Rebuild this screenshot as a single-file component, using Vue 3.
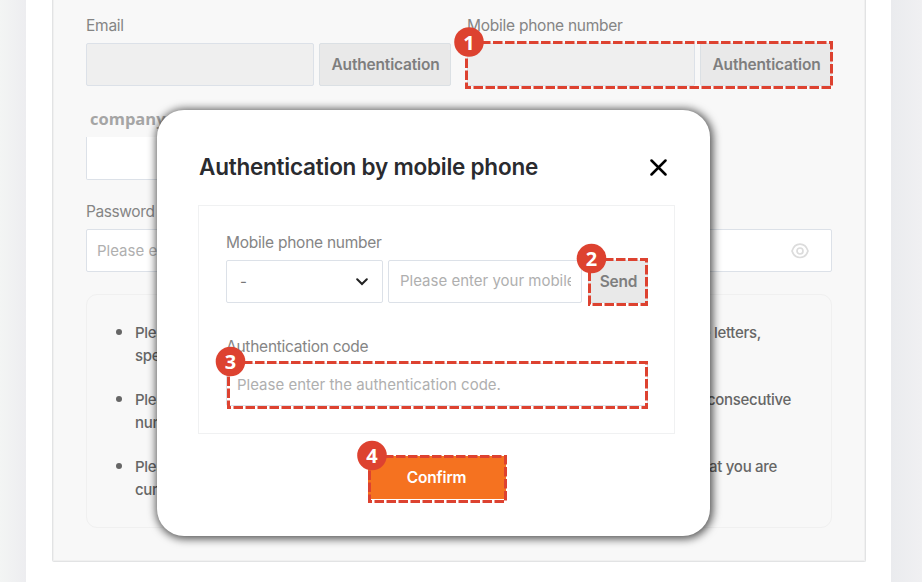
<script setup>
const notes = [
  { head: 'Please', tail: 'include letters,', next: 'special', size: 'short' },
  { head: 'Please', tail: 'consecutive', next: 'numbers', size: 'long' },
  { head: 'Please', tail: 'that you are', next: 'currently', size: 'mid' },
]
const marks = [
  { n: 1, x: 466.5, y: 42.5, w: 365, h: 45, cx: 469, cy: 42 },
  { n: 2, x: 589.5, y: 259.5, w: 57, h: 45, cx: 591.5, cy: 258.5 },
  { n: 3, x: 228.5, y: 362.5, w: 418, h: 45, cx: 230.5, cy: 361.5 },
  { n: 4, x: 369.5, y: 456.5, w: 136, h: 45, cx: 372, cy: 455.5 },
]
</script>

<template>
  <div class="page">
    <main class="sheet">
      <section class="panel">
        <div class="columns">
          <div class="field">
            <label class="label">Email</label>
            <div class="controls">
              <div class="input disabled"></div>
              <button class="btn">Authentication</button>
            </div>
          </div>
          <div class="field">
            <label class="label">Mobile phone number</label>
            <div class="controls">
              <div class="input disabled"></div>
              <button class="btn">Authentication</button>
            </div>
          </div>
        </div>
        <div class="company">company</div>
        <div class="input company-input"></div>
        <label class="label password-label">Password</label>
        <div class="input password">
          <span class="placeholder">Please enter</span>
          <svg class="eye" viewBox="0 0 18 16" width="18" height="16">
            <path d="M1 8C2.5 3.5 5.5 1.2 9 1.2S15.500 3.500 17 8C15.500 12.500 12.500 14.500 9 14.500S2.500 12.500 1 8Z" />
            <circle cx="9" cy="8" r="3" />
          </svg>
        </div>
        <ul class="notes">
          <li v-for="(note, i) in notes" :key="i">
            <div class="line" :class="note.size"><span>{{ note.head }}</span><span>{{ note.tail }}</span></div>
            <div class="line">{{ note.next }}</div>
          </li>
        </ul>
      </section>
    </main>

    <section class="modal">
      <header class="modal-head">
        <h1>Authentication by mobile phone</h1>
        <svg class="close" width="17" height="17" viewBox="0 0 17 17"><path d="M1.500 1.500L15.500 15.500M15.500 1.500L1.500 15.500" /></svg>
      </header>
      <div class="card">
        <label class="label">Mobile phone number</label>
        <div class="controls">
          <div class="input select">
            <span class="dash">-</span>
            <svg width="12" height="8" viewBox="0 0 12 8"><path d="M1.200 1.200L6 6L10.800 1.200" /></svg>
          </div>
          <div class="input number"><span class="placeholder">Please enter your mobile</span></div>
          <button class="btn send">Send</button>
        </div>
        <label class="label code-label">Authentication code</label>
        <div class="input code"><span class="placeholder">Please enter the authentication code.</span></div>
      </div>
      <button class="confirm">Confirm</button>
    </section>

    <svg class="marks" width="922" height="582" viewBox="0 0 922 582">
      <g v-for="m in marks" :key="m.n">
        <rect :x="m.x" :y="m.y" :width="m.w" :height="m.h" />
        <circle :cx="m.cx" :cy="m.cy" r="14.8" />
        <text :x="m.cx" :y="m.cy + 7.500">{{ m.n }}</text>
      </g>
    </svg>
  </div>
</template>

<style>
body { margin: 0; overflow: hidden; }
</style>

<style scoped>
* { box-sizing: border-box; }
.page {
  position: relative;
  width: 922px;
  height: 582px;
  padding: 0 31px 0 26px;
  overflow: hidden;
  background: linear-gradient(90deg, #f3f5f4 0, #ededf0 26px, #ededf0 860px, #eaebee 891px, #f0f0f2 922px);
  font-family: Inter, "Liberation Sans", sans-serif;
}
.sheet { height: 582px; padding: 0 25px 0 26px; background: #fff; }
.panel {
  height: 562px;
  padding: 16px 33px 0;
  border: 1px solid #e2e3e4;
  border-width: 0 1px 1px;
  border-radius: 0 0 2px 2px;
  background: #f8f8f8;
  box-shadow: inset 0 -1px #f0f0f0, inset 1px 0 #f0f0f0, inset -1px 0 #f0f0f0;
}
.columns { display: flex; gap: 16px; }
.field { width: 365px; }
.label { display: block; height: 20px; line-height: 20px; font-size: 15.500px; letter-spacing: -0.25px; color: #858585; white-space: nowrap; }
.password-label { letter-spacing: -0.4px; }
.controls { display: flex; gap: 5px; }
.field .controls { margin-top: 7px; }
.input { height: 43px; border: 1px solid #dce1e8; border-radius: 2px; background: #fff; }
.disabled { flex: 1; background: #efefef; }
.btn {
  width: 132px;
  height: 43px;
  padding: 0;
  border: 1px solid #dbe0e4;
  border-radius: 2px;
  background: #e9e9e9;
  color: #7e7e7e;
  font: 600 15.500px/41px Inter, sans-serif;
  letter-spacing: -0.18px;
  text-indent: 1px;
}
.company { height: 24px; margin: 21px 0 0 4px; font: 700 16.500px/24px "Open Sans", sans-serif; color: #a5a5a5; }
.company-input { margin-top: 6px; width: 400px; border-top: 0; border-radius: 0 0 2px 2px; }
.password-label { margin-top: 22px; }
.password { display: flex; align-items: center; justify-content: space-between; margin-top: 7px; padding: 0 22px 0 10px; }
.placeholder { font-size: 15px; letter-spacing: 0; color: #afafaf; white-space: nowrap; }
.eye { fill: none; stroke: #dcdcdc; stroke-width: 1.700; }
.notes {
  height: 234px;
  margin: 22px 0 0;
  padding: 26px 0 0 48px;
  border: 1px solid #f0f0f0;
  border-radius: 11px;
  list-style: none;
  font-size: 15px;
  font-weight: 500;
  letter-spacing: -0.3px;
  color: #666;
}
.notes li { position: relative; height: 67px; }
.notes li::before { content: ""; position: absolute; left: -19px; top: 8px; width: 6px; height: 6px; border-radius: 50%; background: #666; }
.line { display: flex; justify-content: space-between; height: 23px; line-height: 23px; white-space: nowrap; }
.short { width: 626px; }
.long { width: 656px; }
.mid { width: 642px; }
.modal {
  position: absolute;
  left: 157px;
  top: 110px;
  width: 553px;
  height: 426px;
  padding: 40px 35px 0 41px;
  border-radius: 27px;
  background: #fff;
  box-shadow: 1px 1px 9px 2px rgba(0, 0, 0, 0.66);
}
.modal-head { display: flex; align-items: center; justify-content: space-between; height: 34px; padding: 0 8px 0 1px; }
h1 { margin: 0; font-size: 22.500px; font-weight: 600; line-height: 34px; letter-spacing: -0.23px; color: #2a2b2f; white-space: nowrap; }
.close { fill: none; stroke: #000; stroke-width: 2.500; stroke-linecap: round; }
.card { height: 229px; margin-top: 21px; padding: 27px 26px 0 27px; border: 1px solid #f0f1f2; }
.card .controls { margin-top: 7px; }
.select { display: flex; align-items: center; justify-content: space-between; width: 157px; padding: 0 14px 0 13px; font-size: 15px; color: #777; }
.select svg { fill: none; stroke: #222; stroke-width: 2; stroke-linecap: round; }
.controls .number { width: 194px; padding: 0 11px; margin: 0 1px 0 0; line-height: 40px; }
.number .placeholder { display: block; width: 171px; overflow: hidden; }
.send { width: 60px; }
.code-label { margin-top: 34px; }
.code { margin-top: 6px; padding-left: 10px; line-height: 41px; }
.confirm { display: block; width: 138px; height: 43px; margin: 22px 0 0 170px; padding: 0; border: 0; background: #f57220; color: #fff; font: 600 15.500px/42px Inter, sans-serif; letter-spacing: -0.15px; text-indent: -1px; }
.marks { position: absolute; left: 0; top: 0; }
.marks rect { fill: none; stroke: #dd4230; stroke-width: 3; stroke-dasharray: 9.500 2.500; stroke-dashoffset: 9.500; }
.marks circle { fill: #dd4230; }
.marks text { fill: #fff; font: 700 20px "Noto Sans", sans-serif; text-anchor: middle; }
</style>
